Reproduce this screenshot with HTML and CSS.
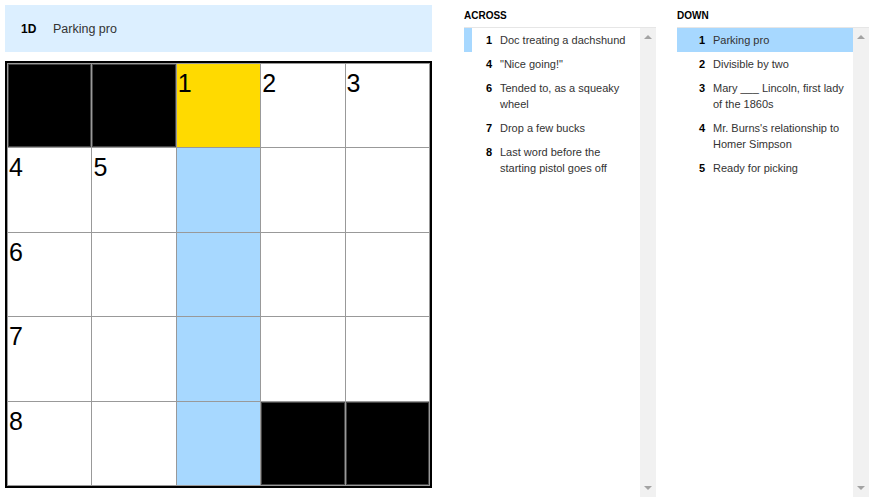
FILE: index.html
```html
<!DOCTYPE html>
<html lang="en">
<head>
	<meta charset="UTF-8">
	<title>Mini Crossword</title>
	<link rel="stylesheet" href="styles.css">
</head>
<body>
	<div class="page">
		<div class="board">
			<div class="clue-bar">
				<span class="clue-bar-num">1D</span>
				<span class="clue-bar-text">Parking pro</span>
			</div>
			<div class="grid">
				<div class="cell block"></div>
				<div class="cell block"></div>
				<div class="cell selected">1</div>
				<div class="cell">2</div>
				<div class="cell">3</div>

				<div class="cell">4</div>
				<div class="cell">5</div>
				<div class="cell word"></div>
				<div class="cell"></div>
				<div class="cell"></div>

				<div class="cell">6</div>
				<div class="cell"></div>
				<div class="cell word"></div>
				<div class="cell"></div>
				<div class="cell"></div>

				<div class="cell">7</div>
				<div class="cell"></div>
				<div class="cell word"></div>
				<div class="cell"></div>
				<div class="cell"></div>

				<div class="cell">8</div>
				<div class="cell"></div>
				<div class="cell word"></div>
				<div class="cell block"></div>
				<div class="cell block"></div>
			</div>
		</div>

		<div class="clues">
			<h3 class="clues-title">ACROSS</h3>
			<div class="clue-box">
				<ol class="clue-list">
					<li class="clue cross"><span class="clue-num">1</span><span class="clue-text">Doc treating a dachshund</span></li>
					<li class="clue"><span class="clue-num">4</span><span class="clue-text">"Nice going!"</span></li>
					<li class="clue"><span class="clue-num">6</span><span class="clue-text">Tended to, as a squeaky wheel</span></li>
					<li class="clue"><span class="clue-num">7</span><span class="clue-text">Drop a few bucks</span></li>
					<li class="clue"><span class="clue-num">8</span><span class="clue-text">Last word before the starting pistol goes off</span></li>
				</ol>
				<div class="scrollbar"><span class="arrow up"></span><span class="arrow down"></span></div>
			</div>
		</div>

		<div class="clues">
			<h3 class="clues-title">DOWN</h3>
			<div class="clue-box">
				<ol class="clue-list">
					<li class="clue active"><span class="clue-num">1</span><span class="clue-text">Parking pro</span></li>
					<li class="clue"><span class="clue-num">2</span><span class="clue-text">Divisible by two</span></li>
					<li class="clue"><span class="clue-num">3</span><span class="clue-text">Mary ___ Lincoln, first lady of the 1860s</span></li>
					<li class="clue"><span class="clue-num">4</span><span class="clue-text">Mr. Burns's relationship to Homer Simpson</span></li>
					<li class="clue"><span class="clue-num">5</span><span class="clue-text">Ready for picking</span></li>
				</ol>
				<div class="scrollbar"><span class="arrow up"></span><span class="arrow down"></span></div>
			</div>
		</div>
	</div>
</body>
</html>
```

FILE: styles.css
```css
* {
	padding: 0;
	margin: 0;
	box-sizing: border-box;
}
body {
	font-family: "Liberation Sans", Arial, sans-serif;
	color: #333;
	background-color: #fff;
}
.page {
	display: flex;
	height: 497px;
	overflow: hidden;
}
.board {
	width: 437px;
	padding: 5px;
}
.clue-bar {
	display: flex;
	align-items: center;
	height: 47px;
	padding-left: 16px;
	background-color: #dcefff;
	font-size: 12.5px;
}
.clue-bar-num {
	width: 32px;
	font-weight: bold;
	color: #000;
	font-size: 12px;
}
.clue-bar-text {
	color: #333;
}
.grid {
	display: grid;
	grid-template-columns: repeat(5, 1fr);
	grid-template-rows: repeat(5, 1fr);
	gap: 1px;
	width: 427px;
	height: 427px;
	margin-top: 9px;
	padding: 1px;
	border: 2px solid #000;
	background-color: #999;
}
.cell {
	padding: 5px 0 0 1px;
	background-color: #fff;
	color: #000;
	font-size: 25px;
	line-height: 1.15;
}
.cell.block {
	background-color: #000;
	box-shadow: inset 0 0 0 1px #444;
}
.cell.selected {
	background-color: #ffda00;
}
.cell.word {
	background-color: #a7d8ff;
}
.clues {
	width: 192px;
	margin-left: 27px;
}
.clues + .clues {
	margin-left: 21px;
}
.clues-title {
	height: 28px;
	padding-top: 4px;
	font-size: 10px;
	line-height: 23px;
	color: #000;
	border-bottom: 1px solid #e6e6e6;
}
.clue-box {
	display: flex;
	height: 469px;
}
.clue-list {
	flex: 1;
	list-style: none;
}
.clue {
	display: flex;
	padding: 4px 8px 4px 0;
	border-left: 8px solid transparent;
	font-size: 11px;
	line-height: 16px;
}
.clue.cross {
	border-left-color: #a7d8ff;
}
.clue.active {
	background-color: #a7d8ff;
	border-left-color: #a7d8ff;
}
.clue-num {
	flex: none;
	width: 20px;
	margin-right: 8px;
	text-align: right;
	font-weight: bold;
	color: #000;
}
.clue-text {
	color: #333;
}
.scrollbar {
	display: flex;
	flex-direction: column;
	justify-content: space-between;
	align-items: center;
	width: 16px;
	padding: 7px 0 7px;
	background-color: #f1f1f1;
}
.arrow {
	width: 0;
	height: 0;
	border-left: 4px solid transparent;
	border-right: 4px solid transparent;
}
.arrow.up {
	border-bottom: 4px solid #a3a3a3;
}
.arrow.down {
	border-top: 4px solid #a3a3a3;
}
```
